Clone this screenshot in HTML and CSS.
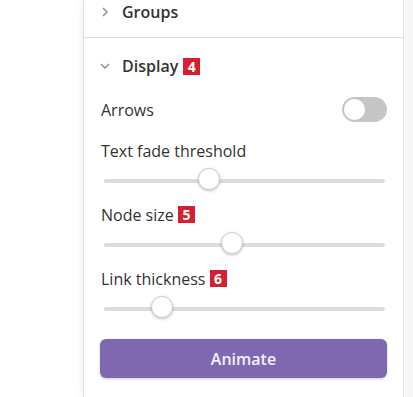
FILE: index.html
```html
<!DOCTYPE html>
<html lang="en">
<head>
  <meta charset="UTF-8">
  <meta name="viewport" content="width=device-width, initial-scale=1.0">
  <title>Graph settings</title>
  <link rel="stylesheet" href="styles.css">
</head>
<body>
  <div class="page">
    <div class="gutter"></div>

    <div class="panel">
      <div class="section section-closed">
        <div class="section-head">
          <svg class="chevron" width="10" height="12" viewBox="0 0 10 12"><path d="M3 2 L7 6 L3 10" fill="none" stroke="#8a8a8a" stroke-width="1.4"/></svg>
          <span class="section-title">Groups</span>
        </div>
      </div>

      <div class="section">
        <div class="section-head section-open">
          <svg class="chevron" width="10" height="12" viewBox="0 0 10 12"><path d="M1 4 L5 8 L9 4" fill="none" stroke="#8a8a8a" stroke-width="1.4"/></svg>
          <span class="section-title">Display</span>
          <span class="badge">4</span>
        </div>

        <div class="row">
          <span class="label">Arrows</span>
          <span class="toggle"><span class="knob"></span></span>
        </div>

        <div class="setting">
          <div class="label">Text fade threshold</div>
          <div class="slider"><span class="thumb" style="left: 105px"></span></div>
        </div>

        <div class="setting">
          <div class="label">Node size <span class="badge">5</span></div>
          <div class="slider"><span class="thumb" style="left: 128px"></span></div>
        </div>

        <div class="setting">
          <div class="label">Link thickness <span class="badge">6</span></div>
          <div class="slider"><span class="thumb" style="left: 58px"></span></div>
        </div>

        <button class="animate">Animate</button>
      </div>
    </div>

    <div class="rail"></div>
  </div>
</body>
</html>
```

FILE: styles.css
```css
body {
  margin: 0;
  font-family: "Open Sans", "Noto Sans", sans-serif;
  color: #333;
  background-color: #fff;
}

.page {
  display: flex;
  height: 397px;
  overflow: hidden;
}

.gutter {
  width: 83px;
  flex-shrink: 0;
}

.rail {
  flex: 1;
  background-color: #f7f7f7;
}

.panel {
  width: 319px;
  flex-shrink: 0;
  background-color: #fff;
  border-left: 1px solid #e2e2e2;
  border-right: 1px solid #e2e2e2;
  box-shadow: 0 0 8px rgba(0, 0, 0, 0.08);
}

.section-closed {
  border-bottom: 1px solid #dedede;
  margin-top: -13px;
}

.section-head {
  display: flex;
  align-items: center;
  height: 50px;
  padding-left: 16px;
}

.section-open {
  padding-top: 3px;
}

.chevron {
  margin-right: 12px;
}

.section-title {
  font-size: 16px;
  font-weight: 600;
  color: #333;
}

.section-head .badge {
  margin-left: 5px;
}

.badge {
  display: inline-block;
  width: 17px;
  height: 17px;
  line-height: 17px;
  text-align: center;
  background-color: #d4202f;
  color: #fff;
  font-size: 14px;
  font-weight: 700;
  vertical-align: 1px;
}

.row {
  display: flex;
  justify-content: space-between;
  align-items: center;
  margin: 6px 16px 0 17px;
}

.label {
  font-size: 16px;
  color: #333;
}

.toggle {
  position: relative;
  width: 45px;
  height: 25px;
  border-radius: 13px;
  background-color: #c6c6c6;
}

.knob {
  position: absolute;
  left: 2px;
  top: 2px;
  width: 21px;
  height: 21px;
  border-radius: 50%;
  background-color: #fff;
}

.setting {
  padding: 0 16px 20px 17px;
}

.row + .setting {
  padding-top: 17px;
}

.setting .label {
  height: 24px;
  line-height: 24px;
}

.slider {
  position: relative;
  height: 4px;
  margin: 16px 2px 0 3px;
  border-radius: 2px;
  background-color: #dcdcdc;
}

.thumb {
  position: absolute;
  top: -11px;
  width: 22px;
  height: 22px;
  margin-left: -11px;
  border-radius: 50%;
  background-color: #fff;
  border: 1px solid #cfcfcf;
  box-sizing: border-box;
  box-shadow: 0 1px 3px rgba(0, 0, 0, 0.25);
}

.animate {
  display: block;
  width: 287px;
  height: 39px;
  margin: 8px 0 0 16px;
  border: none;
  border-radius: 6px;
  background-color: #7e69b0;
  color: #f4f0fb;
  font-family: "Open Sans", "Noto Sans", sans-serif;
  font-size: 16px;
  font-weight: 600;
  box-shadow: 0 1px 3px rgba(0, 0, 0, 0.2);
}
```
